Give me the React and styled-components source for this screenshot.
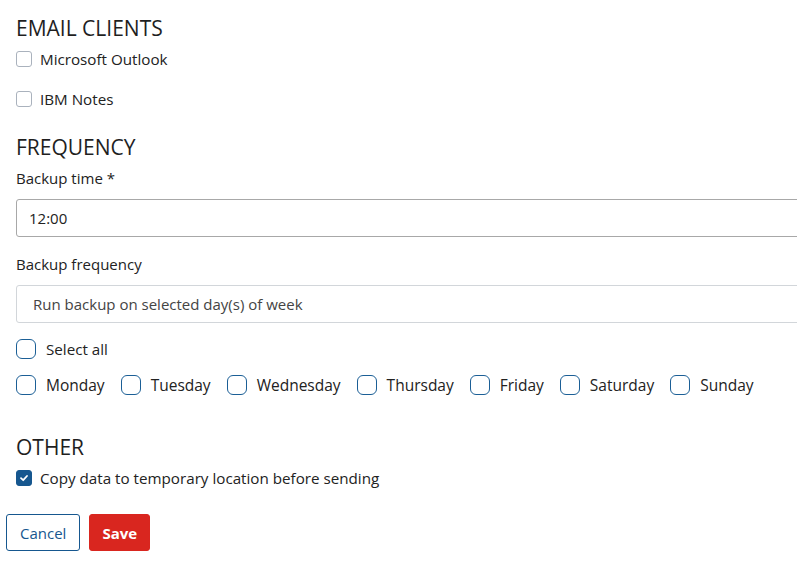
import React from "react";
import styled, { createGlobalStyle } from "styled-components";

const GlobalStyle = createGlobalStyle`
  body {
    margin: 0;
    overflow: hidden;
    font-family: "Open Sans", "Liberation Sans", sans-serif;
    color: #222;
    background: #fff;
  }
`;

const days = ["Monday", "Tuesday", "Wednesday", "Thursday", "Friday", "Saturday", "Sunday"];

const App = () => {
  return (
    <>
      <GlobalStyle />
      <Page>
        <Section>
          <Heading>EMAIL CLIENTS</Heading>
          <CheckRow>
            <Box />
            <Label>Microsoft Outlook</Label>
          </CheckRow>
          <CheckRow>
            <Box />
            <Label>IBM Notes</Label>
          </CheckRow>
        </Section>

        <Section>
          <Heading>FREQUENCY</Heading>
          <FieldLabel>Backup time *</FieldLabel>
          <Input>12:00</Input>
          <FieldLabel>Backup frequency</FieldLabel>
          <Select>Run backup on selected day(s) of week</Select>
          <RoundRow>
            <RoundItem>
              <Round />
              <Label>Select all</Label>
            </RoundItem>
          </RoundRow>
          <RoundRow>
            {days.map((d) => (
              <RoundItem key={d}>
                <Round />
                <Label wide>{d}</Label>
              </RoundItem>
            ))}
          </RoundRow>
        </Section>

        <Section>
          <Heading>OTHER</Heading>
          <CheckRow>
            <Box checked>
              <svg width="10" height="10" viewBox="0 0 10 10">
                <path d="M2 5.2 L4.2 7.2 L8 3" fill="none" stroke="#fff" strokeWidth="1.8" strokeLinecap="round" strokeLinejoin="round" />
              </svg>
            </Box>
            <Label>Copy data to temporary location before sending</Label>
          </CheckRow>
        </Section>

        <Actions>
          <Button>Cancel</Button>
          <Button primary>Save</Button>
        </Actions>
      </Page>
    </>
  );
};

export default App;

const Page = styled.div`
  width: 840px;
  padding: 16px 0 0 16px;
`;

const Section = styled.div`
  display: flex;
  flex-direction: column;
  margin-bottom: 24px;
`;

const Heading = styled.h2`
  margin: 0 0 7px;
  font-size: 21px;
  font-weight: 400;
  line-height: 24px;
  color: #1f1f1f;
`;

const CheckRow = styled.label`
  display: flex;
  align-items: center;
  gap: 8px;
  height: 24px;
  margin-bottom: 16px;
  &:last-child {
    margin-bottom: 0;
  }
`;

const Box = styled.span`
  box-sizing: border-box;
  width: 16px;
  height: 16px;
  border-radius: 3px;
  border: 1px solid ${(p) => (p.checked ? "#16578f" : "#aab2bd")};
  background: ${(p) => (p.checked ? "#16578f" : "#fff")};
  display: flex;
  align-items: center;
  justify-content: center;
`;

const Label = styled.span`
  font-size: ${(p) => (p.wide ? "15.5px" : "15.2px")};
  color: #222;
  white-space: nowrap;
`;

const FieldLabel = styled.div`
  font-size: 15px;
  line-height: 20px;
  margin: 2px 0 11px;
`;

const Input = styled.div`
  box-sizing: border-box;
  height: 38px;
  border: 1px solid #a8a8a8;
  border-radius: 3px;
  padding: 0 12px;
  display: flex;
  align-items: center;
  font-size: 15px;
  margin-bottom: 15px;
`;

const Select = styled(Input)`
  border-color: #d2d6da;
  padding: 0 16px;
  color: #444;
  margin-bottom: 16px;
`;

const RoundRow = styled.div`
  display: flex;
  gap: 16px;
  margin-bottom: 16px;
`;

const RoundItem = styled.label`
  display: flex;
  align-items: center;
  gap: 10px;
  height: 20px;
`;

const Round = styled.span`
  box-sizing: border-box;
  width: 20px;
  height: 20px;
  border: 1.5px solid #1b5f96;
  border-radius: 6px;
`;

const Actions = styled.div`
  display: flex;
  gap: 9px;
  margin: 14px 0 0 -10px;
`;

const Button = styled.button`
  height: 37px;
  padding: 0 ${(p) => (p.primary ? "12px" : "13px")};
  border-radius: 3px;
  font-family: inherit;
  font-size: 15px;
  font-weight: ${(p) => (p.primary ? 700 : 400)};
  border: 1px solid ${(p) => (p.primary ? "#d9261f" : "#16578f")};
  background: ${(p) => (p.primary ? "#d9261f" : "#fff")};
  color: ${(p) => (p.primary ? "#fff" : "#16578f")};
`;
